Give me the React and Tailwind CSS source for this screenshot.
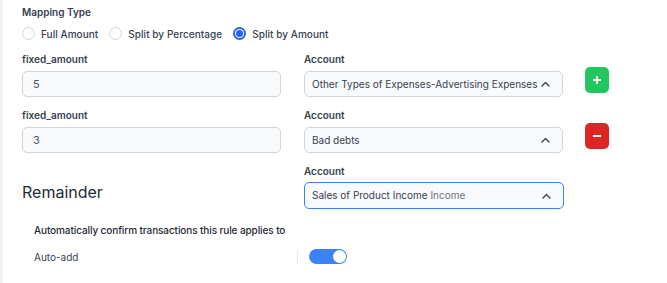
import React from "react";

function ChevronUp() {
  return (
    <svg width="9" height="6" viewBox="0 0 9 6" fill="none" stroke="#374151" strokeWidth="1.4" strokeLinecap="round" strokeLinejoin="round" className="shrink-0">
      <path d="M1 5l3.5-3.5L8 5" />
    </svg>
  );
}

function Radio({ checked, label }) {
  return (
    <label className="flex items-center gap-[6px]">
      {checked ? (
        <span className="w-[13px] h-[13px] rounded-full bg-[#2563eb] flex items-center justify-center">
          <span className="w-[9px] h-[9px] rounded-full bg-white flex items-center justify-center">
            <span className="w-[7px] h-[7px] rounded-full bg-[#2563eb]"></span>
          </span>
        </span>
      ) : (
        <span className="w-[13px] h-[13px] rounded-full border border-[#d1d5db] bg-white"></span>
      )}
      <span className="text-[10px] font-medium text-[#374151] leading-[12px] tracking-[0.05px]">{label}</span>
    </label>
  );
}

function Input({ value }) {
  return (
    <div className="h-[26px] w-[259px] rounded-[5px] border border-[#d1d5db] bg-[#f9fafb] flex items-center px-[10px] text-[11px] text-[#4b5563]">
      {value}
    </div>
  );
}

function Select({ children, focused }) {
  return (
    <div
      className={
        focused
          ? "h-[27px] w-[260px] rounded-[5px] border-[1.5px] border-[#3b82f6] bg-[#f9fafb] flex items-center pl-[7px] pr-[12px] text-[10px] text-[#374151]"
          : "h-[26px] w-[259px] rounded-[5px] border border-[#d1d5db] bg-[#f9fafb] flex items-center pl-[7px] pr-[12px] text-[10px] text-[#374151]"
      }
    >
      <span className="flex-1 whitespace-nowrap overflow-hidden text-ellipsis">{children}</span>
      <ChevronUp />
    </div>
  );
}

function Label({ children }) {
  return <div className="text-[10px] font-semibold text-[#374151] leading-[12px]">{children}</div>;
}

export default function App() {
  return (
    <div
      className="w-[667px] h-[283px] bg-white flex"
      style={{ fontFamily: "Inter, 'Noto Sans', sans-serif" }}
    >
      <div className="w-[3px] bg-[#f1f1f1]"></div>
      <div className="flex-1 pl-[19px] pt-[6px]">
        <Label>Mapping Type</Label>
        <div className="flex items-center gap-[11px] mt-[9px]">
          <Radio label="Full Amount" />
          <Radio label="Split by Percentage" />
          <Radio checked label="Split by Amount" />
        </div>

        <div className="flex mt-[13px]">
          <div className="w-[282px] flex flex-col gap-[6px]">
            <Label>fixed_amount</Label>
            <Input value="5" />
          </div>
          <div className="w-[281px] flex flex-col gap-[6px]">
            <Label>Account</Label>
            <Select>Other Types of Expenses-Advertising Expenses</Select>
          </div>
          <div className="pt-[14px]">
            <div className="w-[24px] h-[26px] rounded-[5px] bg-[#22c55e] flex items-center justify-center">
              <svg width="10" height="10" viewBox="0 0 10 10"><path d="M5 1v8M1 5h8" stroke="white" strokeWidth="2" /></svg>
            </div>
          </div>
        </div>

        <div className="flex mt-[12px]">
          <div className="w-[282px] flex flex-col gap-[6px]">
            <Label>fixed_amount</Label>
            <Input value="3" />
          </div>
          <div className="w-[281px] flex flex-col gap-[6px]">
            <Label>Account</Label>
            <Select>Bad debts</Select>
          </div>
          <div className="pt-[14px]">
            <div className="w-[24px] h-[26px] rounded-[5px] bg-[#dc2626] flex items-center justify-center">
              <svg width="10" height="10" viewBox="0 0 10 10"><path d="M1 5h8" stroke="white" strokeWidth="2" /></svg>
            </div>
          </div>
        </div>

        <div className="flex mt-[12px]">
          <div className="w-[282px] pt-[15px]">
            <span className="text-[16px] leading-[20px] text-[#1f2937]">Remainder</span>
          </div>
          <div className="flex flex-col gap-[5px]">
            <Label>Account</Label>
            <Select focused>
              Sales of Product Income <span className="text-[#6b7280]">Income</span>
            </Select>
          </div>
        </div>

        <div className="pl-[12px] mt-[15px]">
          <div className="text-[10px] leading-[12px] font-medium tracking-[-0.1px] text-[#1f2937]">Automatically confirm transactions this rule applies to</div>
          <div className="flex items-center mt-[13px]">
            <div className="w-[263px] text-[10px] leading-[12px] text-[#374151]">Auto-add</div>
            <div className="w-px h-[14px] bg-[#e5e7eb]"></div>
            <div className="ml-[11px] w-[38px] h-[15px] rounded-full bg-[#3b82f6] flex items-center justify-end pr-[1px]">
              <div className="w-[13px] h-[13px] rounded-full bg-white"></div>
            </div>
          </div>
        </div>
      </div>
    </div>
  );
}
